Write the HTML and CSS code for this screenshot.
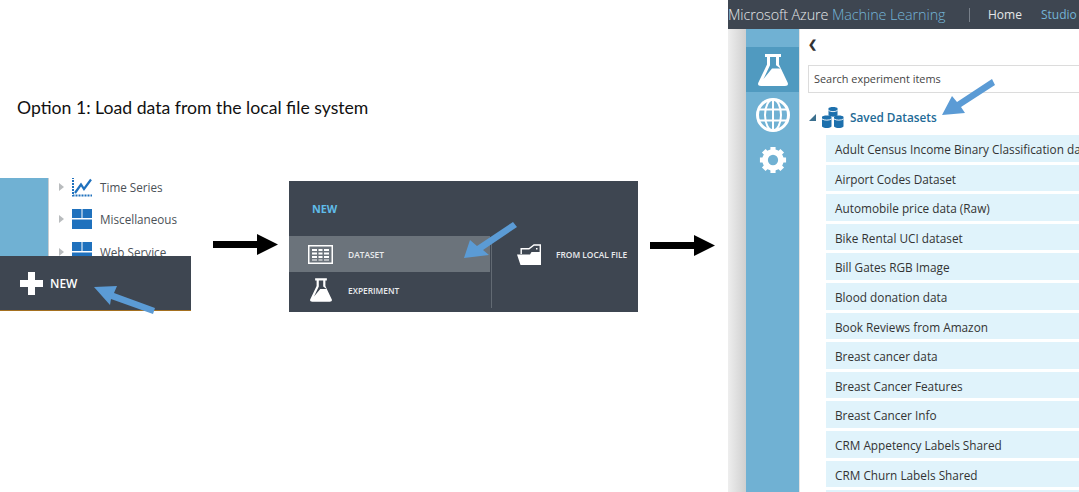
FILE: index.html
```html
<!DOCTYPE html>
<html lang="en">
<head>
<meta charset="utf-8">
<title>Load data from the local file system</title>
<link rel="stylesheet" href="styles.css">
</head>
<body>
<svg class="defs" width="0" height="0" aria-hidden="true">
  <symbol id="flask" viewBox="0 0 30 32">
    <path fill-rule="evenodd" d="M7 0H23V3H21V10.5L29.6 28.5Q31 32 27 32H3Q-1 32 .4 28.5L9 10.5V3H7ZM12 3V11.2L5.5 25 14 14.5H22.500L18 11.2V3Z"/>
  </symbol>
  <symbol id="tiles" viewBox="0 0 20 20">
    <path d="M0 0H9.5V9H0ZM10.5 0H20V9H10.5ZM0 10.5H20V20H0Z"/>
  </symbol>
</svg>

<p class="caption">Option 1: Load data from the local file system</p>

<section class="shot shot-new">
  <div class="tree">
    <div class="tree-side"></div>
    <ul class="tree-list">
      <li class="tree-row"><span class="caret"></span>
        <svg class="tree-icon" viewBox="0 0 20 20"><path d="M1 0V18.5H20" fill="none" stroke="#1f71bd" stroke-width="2" stroke-dasharray="2 1"/><path d="M3 16L9 7.5 12 12 19 2.5" fill="none" stroke="#1f71bd" stroke-width="2.2"/></svg>
        Time Series</li>
      <li class="tree-row"><span class="caret"></span><svg class="tree-icon"><use href="#tiles"/></svg>Miscellaneous</li>
      <li class="tree-row"><span class="caret"></span><svg class="tree-icon"><use href="#tiles"/></svg>Web Service</li>
    </ul>
  </div>
  <div class="new-bar">
    <svg class="plus" viewBox="0 0 23 23"><path d="M8 0H15V8H23V15H15V23H8V15H0V8H8Z"/></svg>
    <span class="new-label">NEW</span>
  </div>
</section>

<section class="shot shot-menu">
  <div class="menu-title">NEW</div>
  <div class="menu-body">
    <div class="menu-col">
      <div class="menu-row is-active">
        <svg class="menu-icon" viewBox="0 0 25 19"><path fill-rule="evenodd" d="M0 0H25V19H0ZM1.5 1.5V17.500H23.500V1.500Z"/><path d="M4 4H9V6H4ZM10.500 4H14.500V6H10.500ZM16 4H21V6H16ZM4 7.500H9V9.500H4ZM10.500 7.500H14.500V9.500H10.500ZM16 7.500H21V9.500H16ZM4 11H9V13H4ZM10.500 11H14.500V13H10.500ZM16 11H21V13H16ZM4 14.500H9V15.500H4ZM10.500 14.500H14.500V15.500H10.500ZM16 14.500H21V15.500H16Z"/></svg>
        DATASET
      </div>
      <div class="menu-row">
        <svg class="menu-flask"><use href="#flask"/></svg>
        EXPERIMENT
      </div>
    </div>
    <div class="menu-side">
      <svg class="folder" viewBox="0 0 24 21"><path d="M0 10.500H13L14.500 8H24V21H3.500Z"/><path class="folder-back" d="M4.200 10V4.700H12L17 1H23.300V10"/><path d="M19 4H20.500V5.500H19Z"/></svg>
      FROM LOCAL FILE
    </div>
  </div>
</section>

<section class="shot shot-studio">
  <header class="studio-top">
    <span class="brand">Microsoft Azure <span class="brand-accent">Machine Learning</span></span>
    <span class="top-sep"></span>
    <span class="top-link">Home</span>
    <span class="top-link is-current">Studio</span>
  </header>
  <div class="studio-main">
    <div class="studio-gutter"></div>
    <nav class="studio-nav">
      <div class="nav-item is-active"><svg class="nav-flask"><use href="#flask"/></svg></div>
      <div class="nav-item">
        <svg class="nav-globe" viewBox="0 0 34 34"><circle cx="17" cy="17" r="15.5" fill="none" stroke="#fff" stroke-width="3"/><ellipse cx="17" cy="17" rx="8" ry="15.5" fill="none" stroke="#fff" stroke-width="2"/><path d="M17 1V33M2 11.5H32M2 22.5H32" stroke="#fff" stroke-width="2" fill="none"/></svg>
      </div>
      <div class="nav-item">
        <svg class="nav-gear" viewBox="0 0 30 30"><circle cx="15" cy="15" r="8.500" fill="none" stroke="#fff" stroke-width="6"/><path d="M15 1V7M15 23V29M1 15H7M23 15H29M5.100 5.100L9.300 9.300M20.700 20.700L24.900 24.900M24.900 5.100L20.700 9.300M9.300 20.700L5.100 24.900" stroke="#fff" stroke-width="5.500" fill="none"/></svg>
      </div>
    </nav>
    <div class="palette">
      <div class="back">&#10094;</div>
      <div class="search">Search experiment items</div>
      <div class="group">
        <span class="group-caret"></span>
        <svg class="db" viewBox="0 0 22 22" fill="#1d70ad"><path d="M6.5 2.5C6.5.5 15.5.5 15.5 2.5V9.5C13 11 9 11 6.5 9.5Z"/><path d="M0 11C0 9 9.5 9 9.5 11V20.5C7 22.500 2.500 22.500 0 20.500Z"/><path d="M12 11C12 9 21.500 9 21.500 11V20.500C19 22.500 14.500 22.500 12 20.500Z"/><path d="M6.500 4.500C9 6 13 6 15.500 4.500M0 13C2.500 14.500 7 14.500 9.500 13M12 13C14.500 14.500 19 14.500 21.500 13" fill="none" stroke="#fff" stroke-width=".9"/></svg>
        <span class="group-label">Saved Datasets</span>
      </div>
      <ul class="items">
        <li class="item">Adult Census Income Binary Classification dataset</li>
        <li class="item">Airport Codes Dataset</li>
        <li class="item">Automobile price data (Raw)</li>
        <li class="item">Bike Rental UCI dataset</li>
        <li class="item">Bill Gates RGB Image</li>
        <li class="item">Blood donation data</li>
        <li class="item">Book Reviews from Amazon</li>
        <li class="item">Breast cancer data</li>
        <li class="item">Breast Cancer Features</li>
        <li class="item">Breast Cancer Info</li>
        <li class="item">CRM Appetency Labels Shared</li>
        <li class="item">CRM Churn Labels Shared</li>
        <li class="item item-empty"></li>
      </ul>
    </div>
  </div>
</section>

<svg class="arrows" viewBox="0 0 1079 492" aria-hidden="true">
  <path class="arrow-black" d="M213 241H257V234L278 244.500 257 255V248H213Z"/>
  <path class="arrow-black" d="M650 242H694V235L715 245.500 694 256V249H650Z"/>
  <path class="arrow-blue" d="M94 287L117 286 114 293 155 308 153 314 111 299 110 305Z"/>
  <path class="arrow-blue" d="M464 258L470 240 477 246 513 222 517 227 483 250 489 255Z"/>
  <path class="arrow-blue" d="M942 115L952 96 957 102 992 79 995 85 961 107 965 113Z"/>
</svg>
</body>
</html>
```
FILE: styles.css
```css
* { box-sizing: border-box; }
html, body { margin: 0; padding: 0; }
body {
  position: relative;
  width: 1079px;
  height: 492px;
  overflow: hidden;
  background: #fff;
  font-family: "Open Sans", "Noto Sans", sans-serif;
}
ul { list-style: none; margin: 0; padding: 0; }
.defs { position: absolute; }

.caption {
  position: absolute;
  left: 17px;
  top: 96px;
  margin: 0;
  font: 17.650px/24px Lato, sans-serif;
  color: #111;
}

.shot { position: absolute; overflow: hidden; }

/* first clip */
.shot-new { left: 0; top: 178px; width: 191px; height: 134px; display: flex; flex-direction: column; }
.tree { display: flex; height: 78px; overflow: hidden; }
.tree-side { width: 49px; background: #70b1d3; border-right: 1px solid #c9ced2; }
.tree-list { margin-top: -7px; }
.tree-row {
  display: flex;
  align-items: center;
  height: 32.3px;
  font-size: 11.700px;
  color: #4b5157;
}
.caret {
  width: 0; height: 0;
  margin: 0 8px 0 10px;
  border-left: 5px solid #b9bcbe;
  border-top: 4px solid transparent;
  border-bottom: 4px solid transparent;
}
.tree-icon { width: 20px; height: 20px; margin-right: 8px; fill: #1f71bd; }
.new-bar {
  flex: none;
  height: 55px;
  display: flex;
  align-items: center;
  padding-left: 20px;
  background: #3e4651;
  border-bottom: 1px solid #a5701f;
  color: #fff;
}
.plus { width: 23px; height: 23px; fill: #fff; margin-right: 7px; }
.new-label { font-size: 12px; font-weight: 600; }

/* second clip */
.shot-menu { left: 289px; top: 181px; width: 349px; height: 131px; background: #3e4651; color: #e9ebed; }
.menu-title { height: 55px; padding: 20px 0 0 23px; font-size: 10.800px; line-height: 16px; font-weight: 700; color: #60bce8; }
.menu-body { display: flex; }
.menu-col { width: 201px; }
.menu-row {
  display: flex;
  align-items: center;
  height: 36px;
  padding-left: 19px;
  font-size: 8.400px;
  font-weight: 600;
}
.menu-row.is-active { background: #6b737b; }
.menu-icon { width: 25px; height: 19px; margin-right: 15px; fill: #fff; }
.menu-flask { width: 22px; height: 24px; margin: 0 16px 0 2px; fill: #fff; }
.menu-side {
  display: flex;
  align-items: center;
  height: 36px;
  margin-left: 1px;
  padding-left: 26px;
  font-size: 8.400px;
  font-weight: 600;
  position: relative;
}
.menu-side::before {
  content: "";
  position: absolute;
  left: 0; top: 7px;
  width: 1px; height: 65px;
  background: #626a73;
}
.folder { width: 24px; height: 21px; margin-right: 15px; fill: #fff; }
.folder-back { fill: none; stroke: #fff; stroke-width: 1.400; }

/* third clip */
.shot-studio { left: 728px; top: 0; width: 351px; height: 492px; display: flex; flex-direction: column; }
.studio-top {
  flex: none;
  height: 29px;
  display: flex;
  align-items: center;
  background: #3e4651;
  color: #e4e6e8;
  white-space: nowrap;
}
.brand { font-size: 14.400px; font-weight: 300; width: 241px; flex: none; letter-spacing: -.1px; }
.brand-accent { color: #74b4d6; }
.top-sep { width: 1px; height: 14px; background: #78808a; margin-right: 18px; }
.top-link { font-size: 12px; margin-right: 19px; }
.top-link.is-current { color: #74b4d6; margin-right: 0; }
.studio-main { flex: 1; display: flex; min-height: 0; }
.studio-gutter { flex: none; width: 18px; background: linear-gradient(90deg, #eee, #cfcfcf); }
.studio-nav { flex: none; width: 53px; background: #70b1d3; padding-top: 18px; }
.nav-item { height: 45px; display: flex; align-items: center; justify-content: center; }
.nav-item.is-active { background: #509ac0; }
.nav-flask { width: 30px; height: 34px; fill: #fff; }
.nav-globe { width: 34px; height: 34px; }
.nav-gear { width: 28px; height: 28px; }
.palette { flex: 1; min-width: 0; padding-left: 8px; border-left: 1px solid #e3e3e3; overflow: hidden; }
.back { height: 36px; padding-top: 5px; font-size: 11px; line-height: 20px; font-weight: 700; color: #333; }
.search {
  height: 28px;
  width: 290px;
  padding-left: 5px;
  border: 1px solid #dcdcdc;
  font-size: 10.900px;
  line-height: 26px;
  color: #444;
}
.group { display: flex; align-items: center; height: 24px; margin-top: 12px; }
.group-caret {
  width: 0; height: 0;
  border-bottom: 7px solid #3b6f8e;
  border-left: 7px solid transparent;
  margin: 0 6px 0 1px;
}
.db { width: 22px; height: 22px; margin-right: 6px; }
.group-label { font-size: 11.800px; font-weight: 600; color: #226a96; }
.items { margin: 6px 0 0 18px; width: 290px; display: flex; flex-direction: column; gap: 3px; }
.item {
  height: 26.600px;
  padding-left: 9px;
  background: #e0f3fb;
  font-size: 11.800px;
  line-height: 28.500px;
  color: #333;
  white-space: nowrap;
}

.arrows { position: absolute; left: 0; top: 0; width: 1079px; height: 492px; pointer-events: none; }
.arrow-black { fill: #000; }
.arrow-blue { fill: #5b9bd5; }
```
